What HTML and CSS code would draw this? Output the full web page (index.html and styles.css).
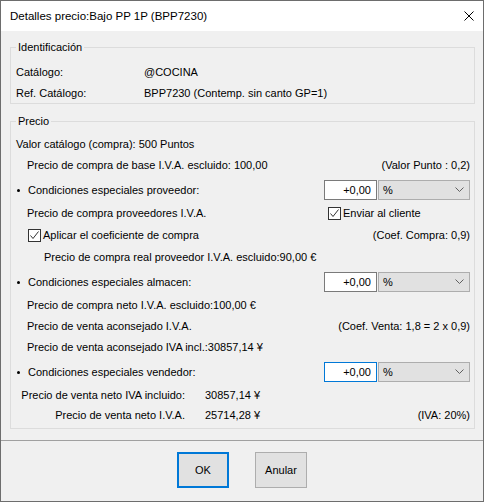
FILE: index.html
```html
<!DOCTYPE html>
<html lang="es">
<head>
    <meta charset="UTF-8">
    <title>Detalles precio</title>
    <link rel="stylesheet" href="styles.css">
</head>
<body>
    <div class="window">
        <!-- Title bar -->
        <div class="titlebar">
            <span class="title">Detalles precio:Bajo PP 1P (BPP7230)</span>
            <svg class="close" width="10" height="10" viewBox="0 0 10 10">
                <path d="M0.5 0.5 L9.5 9.5 M9.5 0.5 L0.5 9.5" stroke="#000" stroke-width="1" fill="none"/>
            </svg>
        </div>

        <div class="content">
            <fieldset class="group group-ident">
                <legend>Identificación</legend>
                <div class="row"><span class="key">Catálogo:</span><span>@COCINA</span></div>
                <div class="row"><span class="key">Ref. Catálogo:</span><span>BPP7230 (Contemp. sin canto GP=1)</span></div>
            </fieldset>

            <fieldset class="group group-price">
                <legend>Precio</legend>
                <div class="row">Valor catálogo (compra): 500 Puntos</div>
                <div class="row indent">
                    <span class="grow">Precio de compra de base I.V.A. escluido: 100,00</span>
                    <span>(Valor Punto : 0,2)</span>
                </div>

                <div class="row cond">
                    <span class="dot"></span>
                    <span class="grow">Condiciones especiales proveedor:</span>
                    <input class="num" type="text" value="+0,00">
                    <div class="combo"><span>%</span><svg width="9" height="5" viewBox="0 0 9 5"><path d="M0.5 0.5 L4.5 4.5 L8.5 0.5" stroke="#606060" fill="none"/></svg></div>
                </div>
                <div class="row indent mid">
                    <span class="grow">Precio de compra proveedores I.V.A.</span>
                    <label class="check side"><span class="box"><svg width="11" height="11" viewBox="0 0 11 11"><path d="M1.5 5.5 L4 8.5 L9.5 1.5" stroke="#333" fill="none"/></svg></span>Enviar al cliente</label>
                </div>
                <div class="row mid">
                    <label class="check grow tick-indent"><span class="box"><svg width="11" height="11" viewBox="0 0 11 11"><path d="M1.5 5.5 L4 8.5 L9.5 1.5" stroke="#333" fill="none"/></svg></span>Aplicar el coeficiente de compra</label>
                    <span>(Coef. Compra: 0,9)</span>
                </div>
                <div class="row deep">Precio de compra real proveedor I.V.A. escluido:90,00 €</div>

                <div class="row cond">
                    <span class="dot"></span>
                    <span class="grow">Condiciones especiales almacen:</span>
                    <input class="num" type="text" value="+0,00">
                    <div class="combo"><span>%</span><svg width="9" height="5" viewBox="0 0 9 5"><path d="M0.5 0.5 L4.5 4.5 L8.5 0.5" stroke="#606060" fill="none"/></svg></div>
                </div>
                <div class="row indent">Precio de compra neto I.V.A. escluido:100,00 €</div>
                <div class="row indent">
                    <span class="grow">Precio de venta aconsejado I.V.A.</span>
                    <span>(Coef. Venta: 1,8 = 2 x 0,9)</span>
                </div>
                <div class="row indent">Precio de venta aconsejado IVA incl.:30857,14 ¥</div>

                <div class="row cond">
                    <span class="dot"></span>
                    <span class="grow">Condiciones especiales vendedor:</span>
                    <input class="num focus" type="text" value="+0,00">
                    <div class="combo"><span>%</span><svg width="9" height="5" viewBox="0 0 9 5"><path d="M0.5 0.5 L4.5 4.5 L8.5 0.5" stroke="#606060" fill="none"/></svg></div>
                </div>
                <div class="row">
                    <span class="total-label">Precio de venta neto IVA incluido:</span>
                    <span class="grow">30857,14 ¥</span>
                </div>
                <div class="row last">
                    <span class="total-label">Precio de venta neto I.V.A.</span>
                    <span class="grow">25714,28 ¥</span>
                    <span>(IVA: 20%)</span>
                </div>
            </fieldset>
        </div>

        <div class="footer">
            <button class="btn btn-default">OK</button>
            <button class="btn">Anular</button>
        </div>
    </div>
</body>
</html>
```

FILE: styles.css
```css
* {
    box-sizing: border-box;
    margin: 0;
    padding: 0;
}

body {
    font-family: "Liberation Sans", Arial, sans-serif;
    font-size: 11px;
    color: #000;
    background: #fff;
}

.window {
    width: 484px;
    height: 502px;
    border: 1px solid #6d6d6d;
    background: #f0f0f0;
    display: flex;
    flex-direction: column;
}

.titlebar {
    height: 30px;
    background: #fff;
    display: flex;
    justify-content: space-between;
    align-items: center;
    padding: 0 9px 0 9px;
}

.title {
    font-size: 11.5px;
}

.content {
    padding: 0 8px 0 9px;
}

.group {
    border: 1px solid #dcdcdc;
    padding: 7px 4px 0 5px;
}

.group legend {
    padding: 0 2px;
    line-height: 14px;
}

.group-ident {
    margin-top: 9px;
}

.group-price {
    margin-top: 10px;
    padding-top: 5px;
    padding-bottom: 3px;
}

.row {
    height: 21px;
    display: flex;
    align-items: center;
    white-space: nowrap;
}

.row.mid {
    height: 22px;
}

.row.cond {
    height: 25px;
    margin-top: 2px;
}

.row.last {
    height: 20px;
}

.indent {
    padding-left: 11px;
}

.deep {
    padding-left: 28px;
}

.grow {
    flex: 1;
}

.key {
    width: 128px;
}

.dot {
    width: 3px;
    height: 3px;
    border-radius: 50%;
    background: #000;
    margin: 1px 8px 0 1px;
}

.num {
    width: 53px;
    height: 20px;
    border: 1px solid #7a7a7a;
    background: #fff;
    font: inherit;
    text-align: right;
    padding-right: 5px;
    outline: none;
}

.num.focus {
    border-color: #0078d7;
}

.combo {
    width: 92px;
    height: 20px;
    margin-left: 1px;
    border: 1px solid #adadad;
    background: #e1e1e1;
    display: flex;
    justify-content: space-between;
    align-items: center;
    padding: 0 5px 0 4px;
}

.check {
    display: flex;
    align-items: center;
}

.tick-indent {
    padding-left: 12px;
}

.side {
    width: 146px;
    padding-left: 4px;
}

.box {
    width: 13px;
    height: 13px;
    border: 1px solid #333;
    background: #fff;
    margin-right: 2px;
    display: flex;
    align-items: center;
    justify-content: center;
}

.total-label {
    width: 169px;
    text-align: right;
    margin-right: 20px;
}

.footer {
    margin-top: 11px;
    border-top: 1px solid #a0a0a0;
    display: flex;
    justify-content: center;
    gap: 26px;
    padding-top: 11px;
}

.btn {
    width: 52px;
    height: 36px;
    border: 1px solid #adadad;
    background: #e1e1e1;
    font: inherit;
    color: #000;
}

.btn-default {
    border: 2px solid #0078d7;
}
```
